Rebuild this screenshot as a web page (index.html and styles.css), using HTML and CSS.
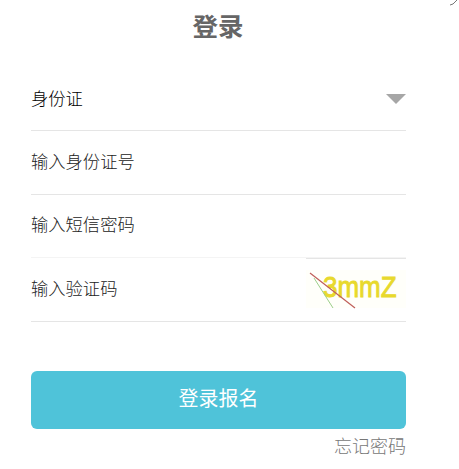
FILE: index.html
```html
<html>
  <head>
    <meta charset="utf-8">
    <title>登录</title>
    <link rel="stylesheet" href="styles.css">
  </head>
  <body>
    <!-- corner of the close icon, cut off by the window -->
    <svg class="corner" width="10" height="6" viewBox="0 0 10 6">
      <path d="M1 5 L4 4 L8 0" fill="none" stroke="#777" stroke-width="1"/>
    </svg>

    <div class="login">
      <h1 class="title">登录</h1>

      <div class="row">
        <span class="select-text">身份证</span>
        <span class="arrow"></span>
      </div>
      <div class="row"><span class="label">输入身份证号</span></div>
      <div class="row row-short"><span class="label">输入短信密码</span></div>
      <div class="row">
        <span class="label">输入验证码</span>
        <svg class="captcha" width="100" height="63" viewBox="0 0 100 63">
          <rect x="0" y="0" width="100" height="1" fill="#e5e5e5"/>
          <rect x="0" y="12" width="100" height="38" fill="#fffffa"/>
          <text class="captcha-text" transform="translate(17 39) scale(1 1.15)">3mmZ</text>
          <path d="M4 15 L49 50" stroke="#c0605a" stroke-width="1.2" fill="none"/>
          <path d="M8 20 L27 50" stroke="#9ccf8a" stroke-width="1" fill="none"/>
        </svg>
      </div>

      <div class="btn">登录报名</div>
      <div class="forgot">忘记密码</div>
    </div>
  </body>
</html>
```

FILE: styles.css
```css
html, body {
  margin: 0;
  padding: 0;
  background: #fff;
  overflow: hidden;
}

body {
  font-family: "Liberation Sans", "Noto Sans CJK SC", sans-serif;
  color: #555;
}

.corner {
  position: absolute;
  right: 0;
  top: 0;
}

.login {
  width: 375px;
  margin-left: 31px;
}

.title {
  margin: 0;
  height: 67px;
  padding-top: 10px;
  padding-right: 1px;
  box-sizing: border-box;
  font-size: 25.5px;
  line-height: 34px;
  font-weight: bold;
  color: #666;
  text-align: center;
}

.row {
  display: flex;
  align-items: center;
  justify-content: space-between;
  height: 64px;
  box-sizing: border-box;
  border-bottom: 1px solid #e5e5e5;
  font-size: 17.3px;
  font-weight: 300;
}

.row-short {
  height: 63px;
  border-bottom-color: #f4f4f4;
}

.select-text {
  margin-bottom: 2px;
  color: #000;
}

.label {
  margin-bottom: 5px;
  color: #222;
}

.arrow {
  width: 0;
  height: 0;
  border-left: 10px solid transparent;
  border-right: 10px solid transparent;
  border-top: 10px solid #a6a6a6;
}

.captcha {
  display: block;
}

.captcha-text {
  font-family: "Liberation Sans", sans-serif;
  font-size: 26px;
  fill: #e8d92c;
  stroke: #e8d92c;
  stroke-width: 0.8px;
}

.btn {
  margin-top: 49px;
  height: 58px;
  line-height: 57px;
  background: #4fc3d9;
  border-radius: 6px;
  color: #fff;
  font-size: 20px;
  text-align: center;
}

.forgot {
  margin-top: 6px;
  font-size: 18px;
  font-weight: 300;
  line-height: 24px;
  color: #777;
  text-align: right;
}
```
